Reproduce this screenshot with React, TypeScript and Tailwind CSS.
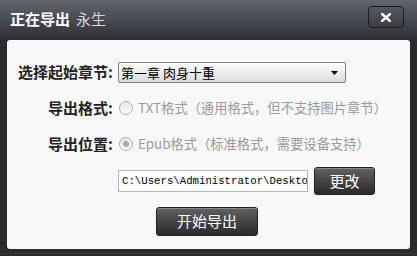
import React from "react";

const cjk = { fontFamily: '"Noto Sans CJK SC", "Liberation Sans", sans-serif' };

function Radio({ checked }: { checked?: boolean }) {
  return (
    <span className="relative flex h-[14px] w-[14px] shrink-0 items-center justify-center rounded-full border border-[#b3b3b3] bg-gradient-to-b from-[#e6e6e6] to-[#fbfbfb]">
      {checked && <span className="h-[6px] w-[6px] rounded-full bg-[#9fb58a]" />}
    </span>
  );
}

function DarkButton({ children, className }: { children: React.ReactNode; className: string }) {
  return (
    <div
      className={`flex items-center justify-center rounded-[3px] border border-[#222] bg-gradient-to-b from-[#626262] via-[#454545] to-[#2a2a2a] text-[15px] text-white shadow-[inset_0_1px_0_rgba(255,255,255,0.25)] ${className}`}
      style={cjk}
    >
      {children}
    </div>
  );
}

export default function App() {
  return (
    <div className="flex h-[256px] w-[417px] flex-col bg-[#2b2b2b]" style={cjk}>
      {/* title bar */}
      <div className="flex h-[40px] shrink-0 items-start justify-between bg-gradient-to-b from-[#62656d] via-[#474a50] to-[#2e2f33] pl-[10px] pr-[13px]">
        <div className="mt-[9px] flex items-baseline text-[15px] leading-[20px]">
          <span className="font-bold text-white">正在导出</span>
          <span className="ml-[6px] text-[#d8d8d8]">永生</span>
        </div>
        <div className="mt-[6px] flex h-[22px] w-[36px] items-center justify-center rounded-[4px] border border-[#1c1c1e] bg-gradient-to-b from-[#55585f] to-[#3c3e43]">
          <svg width="10" height="9" viewBox="0 0 10 9">
            <path d="M1 1 L9 8 M9 1 L1 8" stroke="#fff" strokeWidth="2.4" strokeLinecap="square" />
          </svg>
        </div>
      </div>

      {/* panel */}
      <div className="mx-[7px] flex h-[209px] shrink-0 flex-col rounded-[3px] bg-[#f8f8f8]">
        {/* row 1 */}
        <div className="mt-[22px] flex h-[21px] items-center">
          <div className="w-[106px] shrink-0 text-right text-[15px] font-bold text-[#222]">选择起始章节:</div>
          <div className="ml-[5px] flex h-[21px] w-[228px] items-center justify-between rounded-[2px] border border-[#808080] bg-gradient-to-b from-[#ffffff] to-[#dcdcdc] pl-[2px] pr-[7px]">
            <span className="text-[13px] text-black">第一章 肉身十重</span>
            <svg width="7" height="4" viewBox="0 0 7 4">
              <path d="M0 0 H7 L3.5 4 Z" fill="#000" />
            </svg>
          </div>
        </div>

        {/* row 2 */}
        <div className="mt-[15px] flex h-[20px] items-center">
          <div className="w-[106px] shrink-0 text-right text-[15px] font-bold text-[#222]">导出格式:</div>
          <div className="ml-[6px] flex items-center">
            <Radio />
            <span className="ml-[5px] text-[13.3px] text-[#9a9a9a]">TXT格式（通用格式，但不支持图片章节）</span>
          </div>
        </div>

        {/* row 3 */}
        <div className="mt-[16px] flex h-[20px] items-center">
          <div className="w-[106px] shrink-0 text-right text-[15px] font-bold text-[#222]">导出位置:</div>
          <div className="ml-[6px] flex items-center">
            <Radio checked />
            <span className="ml-[5px] text-[13.3px] text-[#9a9a9a]">Epub格式（标准格式，需要设备支持）</span>
          </div>
        </div>

        {/* row 4 */}
        <div className="mt-[13px] flex h-[28px] items-center pl-[111px]">
          <div className="flex h-[22px] w-[190px] items-center overflow-hidden whitespace-nowrap border border-[#b5b5b5] bg-white pl-[3px]">
            <span className="text-[10.7px] text-black" style={{ fontFamily: '"Liberation Mono", monospace' }}>
              C:\Users\Administrator\Desktop
            </span>
          </div>
          <DarkButton className="ml-[6px] h-[28px] w-[61px]">更改</DarkButton>
        </div>

        {/* row 5 */}
        <div className="mt-[12px] flex h-[29px] pl-[149px]">
          <DarkButton className="h-[29px] w-[102px]">开始导出</DarkButton>
        </div>
      </div>

      <div className="mt-[4px] h-[1px] bg-[#3a3a3a]" />
    </div>
  );
}
